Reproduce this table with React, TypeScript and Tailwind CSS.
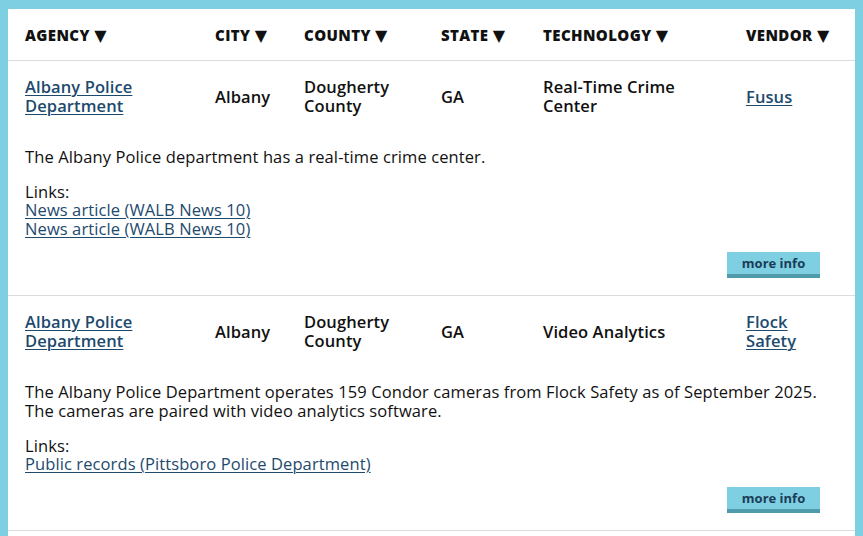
const COLS = "grid grid-cols-[190px_89px_137px_102px_203px_1fr]";

const HEADERS = ["Agency", "City", "County", "State", "Technology", "Vendor"];

type Entry = {
  agency: string[];
  city: string;
  county: string[];
  state: string;
  tech: string[];
  vendor: string[];
  description: string[];
  links: string[];
};

const ENTRIES: Entry[] = [
  {
    agency: ["Albany Police", "Department"],
    city: "Albany",
    county: ["Dougherty", "County"],
    state: "GA",
    tech: ["Real-Time Crime", "Center"],
    vendor: ["Fusus"],
    description: ["The Albany Police department has a real-time crime center."],
    links: ["News article (WALB News 10)", "News article (WALB News 10)"],
  },
  {
    agency: ["Albany Police", "Department"],
    city: "Albany",
    county: ["Dougherty", "County"],
    state: "GA",
    tech: ["Video Analytics"],
    vendor: ["Flock", "Safety"],
    description: [
      "The Albany Police Department operates 159 Condor cameras from Flock Safety as of September 2025.",
      "The cameras are paired with video analytics software.",
    ],
    links: ["Public records (Pittsboro Police Department)"],
  },
];

function Lines({ lines }: { lines: string[] }) {
  return (
    <>
      {lines.map((l, i) => (
        <span key={i} className="block h-[19px]">
          {l}
        </span>
      ))}
    </>
  );
}

function Row({ entry }: { entry: Entry }) {
  const link = "text-[#1d4a6d] underline underline-offset-2 decoration-1";
  return (
    <div className="border-b border-[#dcdcdc] px-[17px] pt-[16px] pb-[17px] text-[16.5px] leading-[19px] tracking-[0.1px] text-[#111]">
      <div className={`${COLS} items-center font-semibold`}>
        <a href="#" className={link}>
          <Lines lines={entry.agency} />
        </a>
        <div>{entry.city}</div>
        <div>
          <Lines lines={entry.county} />
        </div>
        <div>{entry.state}</div>
        <div>
          <Lines lines={entry.tech} />
        </div>
        <a href="#" className={link}>
          <Lines lines={entry.vendor} />
        </a>
      </div>
      <p className="mt-[32px]">
        <Lines lines={entry.description} />
      </p>
      <div className="mt-[16px]">
        <div className="h-[18px]">Links:</div>
        {entry.links.map((l, i) => (
          <a key={i} href="#" className={`block h-[19px] ${link}`}>
            {l}
          </a>
        ))}
      </div>
      <div className="mt-[14px] flex justify-end pr-[18px]">
        <button className="h-[26px] w-[93px] border-b-[4px] border-[#4f9aab] bg-[#7dcfe1] text-[13px] font-bold tracking-normal text-[#1b3c58]">
          more info
        </button>
      </div>
    </div>
  );
}

export default function App() {
  return (
    <div
      className="h-[536px] w-[863px] overflow-hidden bg-[#7dcfe1] pl-[8px] pr-[8px] pt-[9px]"
      style={{ fontFamily: '"Open Sans", "DejaVu Sans", sans-serif' }}
    >
      <div className="h-full bg-white">
        <div className={`${COLS} h-[52px] items-center border-b border-[#dcdcdc] px-[17px] pt-[1px]`}>
          {HEADERS.map((h) => (
            <div key={h} className="text-[15px] font-extrabold uppercase tracking-[0.4px] text-[#111]">
              {h} <span className="text-[16px]">▼</span>
            </div>
          ))}
        </div>
        {ENTRIES.map((e, i) => (
          <Row key={i} entry={e} />
        ))}
      </div>
    </div>
  );
}
